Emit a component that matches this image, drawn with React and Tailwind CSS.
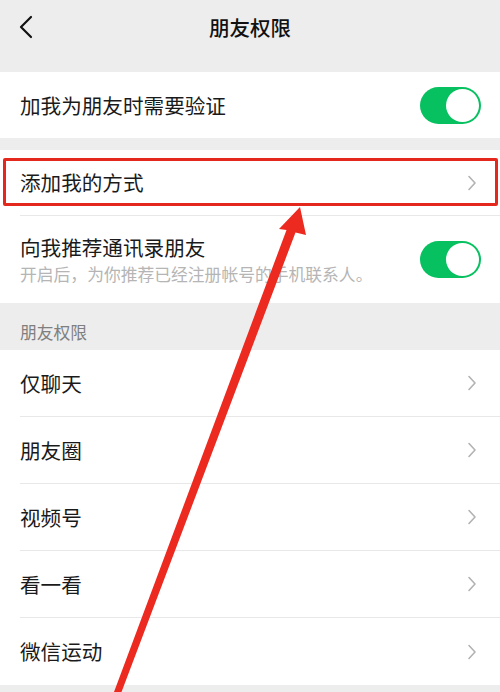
import React from "react";

const font = { fontFamily: '"Noto Sans CJK SC", "Noto Sans", sans-serif' };

const Chevron = () => (
  <svg width="10" height="16" viewBox="0 0 10 16" className="shrink-0">
    <path d="M2 1.5 L8 8 L2 14.5" fill="none" stroke="#b2b2b2" strokeWidth="1.6" strokeLinecap="round" strokeLinejoin="round" />
  </svg>
);

const Toggle = () => (
  <div className="w-[61px] h-[37px] rounded-full bg-[#07c160] flex items-center justify-end p-[2px] shrink-0">
    <div className="w-[33px] h-[33px] rounded-full bg-white" />
  </div>
);

const LinkRow = ({ label, last }) => (
  <div className="h-[67px] pl-5 bg-white">
    <div className={`h-full flex items-center justify-between pr-[23px] ${last ? "" : "border-b border-[#e8e8e8]"}`}>
      <span className="text-[20.6px] text-[#1a1a1a]">{label}</span>
      <Chevron />
    </div>
  </div>
);

export default function App() {
  const rows = ["仅聊天", "朋友圈", "视频号", "看一看", "微信运动"];

  return (
    <div className="relative w-[500px] h-[692px] overflow-hidden bg-[#ededed]" style={font}>
      {/* Header */}
      <div className="h-[54px] relative flex items-center justify-center">
        <svg width="16" height="24" viewBox="0 0 16 24" className="absolute left-[18px] top-[15px]">
          <path d="M13 2 L3 12 L13 22" fill="none" stroke="#111" strokeWidth="2.2" strokeLinecap="round" strokeLinejoin="round" />
        </svg>
        <span className="text-[20.5px] font-medium text-[#111]">朋友权限</span>
      </div>
      <div className="h-[18px]" />

      {/* Verification */}
      <div className="h-[66px] bg-white flex items-center justify-between pl-5 pr-[19px]">
        <span className="text-[20.6px] text-[#1a1a1a]">加我为朋友时需要验证</span>
        <Toggle />
      </div>

      <div className="h-[12px]" />

      {/* Add methods */}
      <div className="bg-white">
        <div className="relative h-[66px] pl-5">
          <div className="h-full flex items-center justify-between pr-[23px] border-b border-[#e8e8e8]">
            <span className="text-[20.6px] text-[#1a1a1a]">添加我的方式</span>
            <Chevron />
          </div>
          <div className="absolute left-[3px] right-[2px] top-[8px] h-[48px] border-[3px] border-[#e5281e] rounded-[2px]" />
        </div>
        <div className="h-[87px] flex items-center justify-between pl-5 pr-[19px]">
          <div className="flex flex-col">
            <span className="text-[20.6px] leading-[28px] text-[#1a1a1a]">向我推荐通讯录朋友</span>
            <span className="text-[16.8px] leading-[24px] mt-[1px] text-[#b5b5b5]">开启后，为你推荐已经注册帐号的手机联系人。</span>
          </div>
          <Toggle />
        </div>
      </div>

      {/* Section header */}
      <div className="h-[47px] flex items-end pl-5 pb-[5px]">
        <span className="text-[16.8px] text-[#7f7f7f]">朋友权限</span>
      </div>

      <div className="bg-white">
        {rows.map((r, i) => (
          <LinkRow key={r} label={r} last={i === rows.length - 1} />
        ))}
      </div>

      {/* Annotation arrow */}
      <svg className="absolute left-0 top-0 pointer-events-none" width="500" height="692" viewBox="0 0 500 692">
        <polygon
          points="300,207 279,229 286.5,230 114,692 121.5,692 295.5,232.5 306,235"
          fill="#ec2a1f"
        />
      </svg>
    </div>
  );
}
